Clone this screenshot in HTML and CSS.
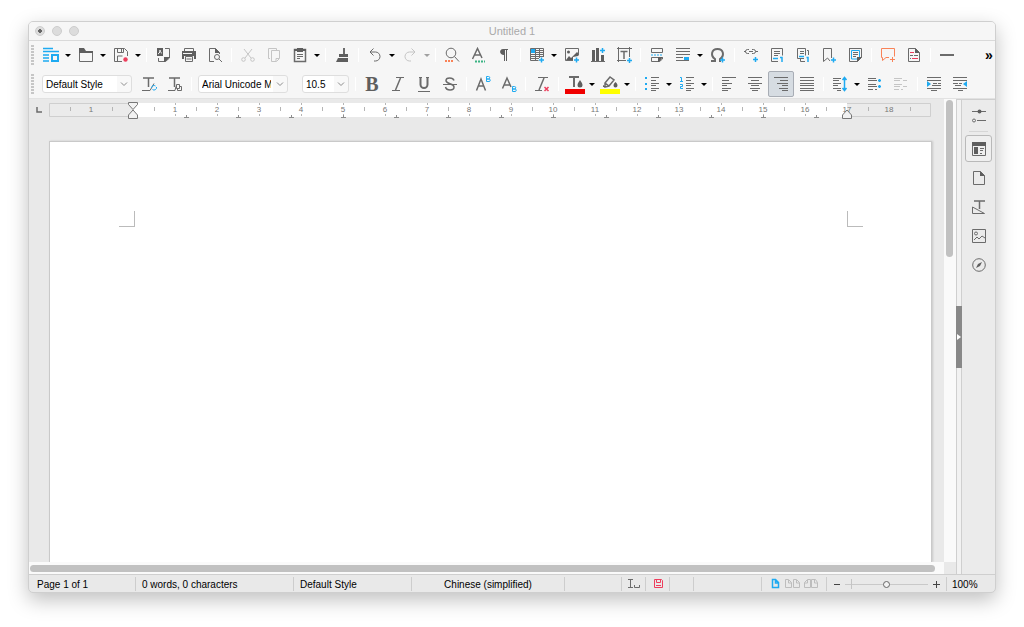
FILE: index.html
```html
<!DOCTYPE html>
<html lang="en">
<head>
    <meta charset="UTF-8">
    <meta name="viewport" content="width=device-width, initial-scale=1.0">
    <title>Untitled 1</title>
    <link rel="stylesheet" href="styles.css">
</head>
<body>

    <div class="window">
        <header class="titlebar">
            <div class="lights">
                <button class="light edited" aria-label="Close"></button>
                <button class="light" aria-label="Minimize"></button>
                <button class="light" aria-label="Zoom"></button>
            </div>
            <h1>Untitled 1</h1>
        </header>

        <div class="toolbars">
            <!-- Standard toolbar -->
            <div class="toolbar">
                <span class="grip"></span>
                <button class="btn" aria-label="New"><svg viewBox="0 0 16 16"><path class="blue mid" d="M0 1.500h10M0 4.500h16M0 8h6M0 11h6M0 14h6"/><path class="blue thick" d="M9 8h6v6H9z"/></svg></button>
                <button class="arrow" aria-label="New menu"></button>
                <button class="btn" aria-label="Open"><svg viewBox="0 0 16 16"><path d="M1.500 2.500v12h13v-10h-8l-1-2z"/><path class="fill" d="M1 1h5l2 3h7v2H1z"/></svg></button>
                <button class="arrow" aria-label="Open menu"></button>
                <button class="btn" aria-label="Save"><svg viewBox="0 0 16 16"><path d="M9 14.500H1.500v-13h10l3 3V9M4.500 1.500v4h6v-4M4.500 14v-5h5M8.500 2v3"/><circle class="redfill" cx="12.500" cy="12.500" r="2.200"/></svg></button>
                <button class="arrow" aria-label="Save menu"></button>
                <span class="sep"></span>
                <button class="btn" aria-label="Export as PDF"><svg viewBox="0 0 16 16"><path class="fill" d="M2 1h6v8H2z"/><path class="white" d="M3 7c2-1 2-3 2-4 0 2 1 3 2 3"/><path d="M10 1.500h4.500V11l-4 3.500h-7V11"/><path class="fill" d="M9 10h6l-5 5H9z"/></svg></button>
                <button class="btn" aria-label="Print"><svg viewBox="0 0 16 16"><path d="M3.500 4V1.500h9V4"/><path class="fill" d="M1 4h14v8h-2V9H3v3H1z"/><path d="M4.500 9.500h7v5h-7zM5.500 12h5"/><path class="white" d="M2 6.500h9"/></svg></button>
                <button class="btn" aria-label="Print Preview"><svg viewBox="0 0 16 16"><path d="M7 14.500H2.500v-13h6l4 4V7"/><path class="fill" d="M8 1l5 5H8z"/><circle cx="10" cy="10" r="2.500"/><path d="M12 12l3 3"/></svg></button>
                <span class="sep"></span>
                <button class="btn" aria-label="Cut" disabled><svg viewBox="0 0 16 16"><path d="M4 2l7 9M12 2l-7 9"/><circle cx="3.500" cy="12.500" r="1.800"/><circle cx="12.500" cy="12.500" r="1.800"/></svg></button>
                <button class="btn" aria-label="Copy" disabled><svg viewBox="0 0 16 16"><path d="M4 11.500H2.500v-10h8V3M5.500 3.500h8v8l-3 3h-5zM13 11.500h-3V14"/></svg></button>
                <button class="btn" aria-label="Paste"><svg viewBox="0 0 16 16"><path class="mid" d="M2.500 2.500h11v12h-11z"/><path class="fill" d="M5 1h6v4H5zM2 2h12v2H2z"/><path d="M5 7.500h6M5 9.500h6M5 11.500h3"/></svg></button>
                <button class="arrow" aria-label="Paste menu"></button>
                <span class="sep"></span>
                <button class="btn" aria-label="Clone Formatting"><svg viewBox="0 0 16 16"><path class="thick" d="M10 1v6"/><path class="fill" d="M5 7h9v3H5zM4 11h10v4H2z"/></svg></button>
                <span class="sep"></span>
                <button class="btn" aria-label="Undo"><svg viewBox="0 0 16 16"><path d="M6.500 1.500L3 5l3.500 3.500M3 5h5.500a4.500 4.500 0 0 1 0 9H7"/></svg></button>
                <button class="arrow" aria-label="Undo menu"></button>
                <button class="btn" aria-label="Redo" disabled><svg viewBox="0 0 16 16"><path d="M9.500 1.500L13 5 9.500 8.500M13 5H7.500a4.500 4.500 0 0 0 0 9H9"/></svg></button>
                <button class="arrow" aria-label="Redo menu" disabled></button>
                <span class="sep"></span>
                <button class="btn" aria-label="Find and Replace"><svg viewBox="0 0 16 16"><circle cx="7" cy="6" r="4.800"/><path d="M10.500 9.500l4.500 5"/><path class="orange dots" d="M1 14h9"/></svg></button>
                <button class="btn" aria-label="Spelling"><svg viewBox="0 0 16 16"><path class="mid" d="M2.500 12L7.500 1.500 12 11M4 8h7"/><path class="green dots" d="M5 14.500h10"/></svg></button>
                <button class="btn" aria-label="Formatting Marks"><svg viewBox="0 0 16 16"><path class="fill" d="M7 2h5v1h-1v11h-1V3H9v11H8V8C3 8 3 2 7 2z"/></svg></button>
                <span class="sep"></span>
                <button class="btn" aria-label="Insert Table"><svg viewBox="0 0 16 16"><path d="M1.500 1.500h13v8M1.500 1.500v12h8M1 5.500h14M1 9.500h14M6.500 1v13M10.500 1v10M1 11.500h9M1 7.500h14M1 3.500h14"/><path class="bluefill" d="M2 2h4v4H2z"/><path class="blue mid" d="M10 13h5M12.500 10.500v5"/></svg></button>
                <button class="arrow" aria-label="Table menu"></button>
                <button class="btn" aria-label="Insert Image"><svg viewBox="0 0 16 16"><path d="M9 13.500H1.500v-12h13v7"/><circle class="fill" cx="4.500" cy="5" r="1.500"/><path class="fill" d="M2 13l3-4 2 2 6-6 1 1v3l-5 1v3z"/><path class="blue mid" d="M10 13h5M12.500 10.500v5"/></svg></button>
                <button class="btn" aria-label="Insert Chart"><svg viewBox="0 0 16 16"><path d="M1 14.500h14"/><path class="fill" d="M2 3h3v11H2zM6 1h3v13H6zM11 8h3v6h-3z"/><path class="blue mid" d="M10 3.500h5M12.500 1v5"/></svg></button>
                <button class="btn" aria-label="Insert Text Box"><svg viewBox="0 0 16 16"><path d="M2.500 0v15M13.500 0v10M1 1.500h15M1 13.500h9"/><path class="mid" d="M4.500 4.500h7M8 4v8"/><path class="blue mid" d="M11 13.500h5M13.500 11v5"/></svg></button>
                <span class="sep"></span>
                <button class="btn" aria-label="Page Break"><svg viewBox="0 0 16 16"><path d="M2.500 1.500h11v4h-11zM2.500 14v-3.500h11V12l-3 2.500h-8z"/><path class="fill" d="M9 10h5l-4 5H9z"/><path class="blue" stroke-dasharray="2 1" d="M2 8h12"/></svg></button>
                <button class="btn" aria-label="Insert Field"><svg viewBox="0 0 16 16"><path d="M1 1.500h14M1 4.500h14M1 7.500h14M1 10.500h7M1 13.500h13"/><path class="bluefill" d="M9 10h5v3H9z"/></svg></button>
                <button class="arrow" aria-label="Field menu"></button>
                <button class="btn" aria-label="Special Character"><svg viewBox="0 0 16 16"><path class="thick" d="M1 14h4v-2C.500 9 1 2 7.500 2s7 7 2.500 10v2h1"/><path class="blue mid" d="M10 13h5M12.500 10.500v5"/></svg></button>
                <span class="sep"></span>
                <button class="btn" aria-label="Hyperlink"><svg viewBox="0 0 16 16"><path d="M1 4.500h2M6 2.500H4.500a2 2 0 0 0 0 4H6M6 4.500h4M9 2.500h1.500a2 2 0 0 1 0 4H9M12.500 4.500H15"/><path class="blue mid" d="M10 12.500h5M12.500 10v5"/></svg></button>
                <button class="btn" aria-label="Footnote"><svg viewBox="0 0 16 16"><path d="M9 14.500H2.500v-13h11v7M5 4.500h6M5 6.500h6M5 8.500h4"/><path class="blue mid" d="M4 11.500h5M11 10.500h2v4.500"/></svg></button>
                <button class="btn" aria-label="Endnote"><svg viewBox="0 0 16 16"><path d="M9 11.500H2.500v-10h8v7M5 4.500h4M5 6.500h4M12 3.500h1.500V8M5.500 12v2.500H10"/><path class="blue mid" d="M4 9.500h5M11.500 10.500h1.500V15"/></svg></button>
                <button class="btn" aria-label="Bookmark"><svg viewBox="0 0 16 16"><path d="M9 14l-2.500-3-4 3.500v-13h8V11"/><path class="blue mid" d="M10 13h5M12.500 10.500v5"/></svg></button>
                <button class="btn" aria-label="Cross-reference"><svg viewBox="0 0 16 16"><path d="M2 1.500h12.500v9l-4 4h-8v-13"/><path class="blue" d="M4.500 3.500h8v7l-2 1.500h-6z"/><path d="M6 5.500h5M6 7.500h5M6 9.500h3"/><path class="fill" d="M10 10h5l-5 5z"/></svg></button>
                <span class="sep"></span>
                <button class="btn" aria-label="Comment"><svg viewBox="0 0 16 16"><path class="orange" d="M9 10.500H6l-3.500 3v-3h-1v-9h13v8M10 12.500h5M12.500 10v5"/></svg></button>
                <button class="btn" aria-label="Track Changes"><svg viewBox="0 0 16 16"><path d="M2.500 1.500h7l4 4v9h-11z"/><path class="fill" d="M9 1l5 5H9z"/><path class="red" d="M4 5.500h4M6 11.500h6"/><path d="M4 8.500h3M8 8.500h4M4 11.500h1"/></svg></button>
                <span class="sep"></span>
                <button class="btn" aria-label="Insert Line"><svg viewBox="0 0 16 16"><path class="thick" d="M1 8h14"/></svg></button>
                <button class="more" aria-label="More controls">»</button>
            </div>

            <!-- Formatting toolbar -->
            <div class="toolbar format">
                <span class="grip"></span>
                <select class="combo" aria-label="Paragraph style"><option>Default Style</option></select>
                <button class="btn" aria-label="Update Style"><svg viewBox="0 0 16 16"><path class="mid" d="M2 2h11M7.500 2v9"/><path d="M1 14.500h8l4-7"/><path class="blue" d="M10.500 12a2.500 2.500 0 0 1 4-2M15.500 11a2.500 2.500 0 0 1-4 2.500"/></svg></button>
                <button class="btn" aria-label="New Style"><svg viewBox="0 0 16 16"><path class="mid" d="M2 2h11M7.500 2v9"/><path d="M1 14.500h7l1-4M9.500 8.500h3v4h-3zM12.500 10.500h2v4h-4v-2"/></svg></button>
                <span class="sep"></span>
                <select class="combo font" aria-label="Font name"><option>Arial Unicode MS</option></select>
                <select class="combo size" aria-label="Font size"><option>10.5</option></select>
                <span class="sep"></span>
                <button class="btn letter bold" aria-label="Bold">B</button>
                <button class="btn" aria-label="Italic"><svg viewBox="0 0 16 16"><path d="M6 1.500h8M2 14.500h8"/><path class="mid" d="M10.500 2l-5 12"/></svg></button>
                <button class="btn" aria-label="Underline"><svg viewBox="0 0 16 16"><path class="thick" d="M4.500 1v7.500a3.500 3.500 0 0 0 7 0V1"/><path d="M3 1.500h3M10 1.500h3M2 15.500h12"/></svg></button>
                <button class="btn" aria-label="Strikethrough"><svg viewBox="0 0 16 16"><path class="mid" d="M12 4.500C11 1 4 1 4 4.500c0 4 8 2.500 8 6.500 0 4-7.500 4-8.500 0"/><path d="M1 8.500h14"/></svg></button>
                <span class="sep"></span>
                <button class="btn" aria-label="Superscript"><svg viewBox="0 0 16 16"><path class="mid" d="M1.500 14.500L6 3l4.500 11.500M3 10h6"/><path class="blue" d="M11.500.500h2a1 1 0 0 1 0 2.500h-2zM11.500 3h2.500a1 1 0 0 1 0 2.500h-2.500z"/></svg></button>
                <button class="btn" aria-label="Subscript"><svg viewBox="0 0 16 16"><path class="mid" d="M1.500 12.500L6 2l4 9M3 9h6"/><path class="blue" d="M11.500 10.500h2a1 1 0 0 1 0 2.500h-2zM11.500 13h2.500a1 1 0 0 1 0 2.500h-2.500z"/></svg></button>
                <span class="sep"></span>
                <button class="btn" aria-label="Clear Formatting"><svg viewBox="0 0 16 16"><path d="M4 1.500h10M1 14.500h7"/><path class="mid" d="M10 2L5 14"/><path class="red mid" d="M10.500 11l4 4M14.500 11l-4 4"/></svg></button>
                <span class="sep"></span>
                <button class="btn" aria-label="Font Color"><svg class="wide" viewBox="0 0 20 20"><path class="thick" d="M4 3h10M9 3v10"/><path class="fill" d="M15 6c1 2 2.500 3 2.500 5a2.300 2.300 0 0 1-5 0c0-2 1.500-3 2.500-5z"/><path class="swatch-red" d="M0 15h20v5H0z"/></svg></button>
                <button class="arrow" aria-label="Font color menu"></button>
                <button class="btn" aria-label="Highlighting"><svg class="wide" viewBox="0 0 20 20"><path class="mid" d="M5 9l5-6 4 3-5 6-4 1zM5 9l4 3"/><path class="fill" d="M15.500 8c1 1 2 2 2 3.500a2 2 0 0 1-4 0c0-1.500 1-2.500 2-3.500zM3 11l3 2H3z"/><path class="swatch-yellow" d="M0 15h20v5H0z"/></svg></button>
                <button class="arrow" aria-label="Highlighting menu"></button>
                <span class="sep"></span>
                <button class="btn" aria-label="Bullets"><svg viewBox="0 0 16 16"><path class="bluefill" d="M1 1h2v2H1zM1 7h2v2H1zM1 12h2v2H1z"/><path d="M7 1.500h8M7 4.500h5M7 7.500h8M7 9.500h5M7 12.500h8M7 14.500h5"/></svg></button>
                <button class="arrow" aria-label="Bullets menu"></button>
                <button class="btn" aria-label="Numbering"><svg viewBox="0 0 16 16"><path class="blue" d="M1 1.500h1.500v4M1 5.500h3M1 8.500h2.500v2H1.500v2H4"/><path d="M7 1.500h8M7 4.500h5M7 7.500h8M7 9.500h5M7 12.500h8M7 14.500h5"/></svg></button>
                <button class="arrow" aria-label="Numbering menu"></button>
                <span class="sep"></span>
                <button class="btn" aria-label="Align Left"><svg viewBox="0 0 16 16"><path d="M1 1.500h14M1 4.500h7M1 7.500h10M1 9.500h5M1 12.500h9M1 14.500h6"/></svg></button>
                <button class="btn" aria-label="Center"><svg viewBox="0 0 16 16"><path d="M1 1.500h14M4 4.500h8M1 7.500h14M4 9.500h8M3 12.500h10M5 14.500h6"/></svg></button>
                <button class="btn active" aria-label="Align Right"><svg viewBox="0 0 16 16"><path d="M1 1.500h14M7 4.500h8M4 7.500h11M9 9.500h6M6 12.500h9M9 14.500h6"/></svg></button>
                <button class="btn" aria-label="Justified"><svg viewBox="0 0 16 16"><path d="M1 1.500h14M1 4.500h14M1 7.500h14M1 9.500h14M1 12.500h14M1 14.500h14"/></svg></button>
                <span class="sep"></span>
                <button class="btn" aria-label="Line Spacing"><svg viewBox="0 0 16 16"><path d="M1 2.500h8M1 4.500h6M1 7.500h8M1 9.500h5M1 12.500h8M5 14.500h4"/><path class="blue mid" d="M12.500 2v12M10.500 4l2-2.500 2 2.500M10.500 12l2 2.500 2-2.500"/></svg></button>
                <button class="arrow" aria-label="Line spacing menu"></button>
                <button class="btn" aria-label="Increase Paragraph Spacing"><svg viewBox="0 0 16 16"><path d="M1 2.500h8M1 4.500h9M1 8.500h8M1 10.500h9M1 13.500h5M8 13.500h2"/><path class="blue mid" d="M11 4.500h3M12.500 3v3M11 10.500h3M12.500 9v3"/></svg></button>
                <button class="btn" aria-label="Decrease Paragraph Spacing" disabled><svg viewBox="0 0 16 16"><path d="M1 2.500h8M1 4.500h6M1 8.500h8M1 10.500h6M1 13.500h5M8 13.500h2M10 4.500h4M10 10.500h4"/></svg></button>
                <span class="sep"></span>
                <button class="btn" aria-label="Increase Indent"><svg viewBox="0 0 16 16"><path d="M1 1.500h14M1 4.500h14M7 7.500h4M12 7.500h3M6 9.500h9M1 12.500h14M5 14.500h6"/><path class="bluefill" d="M1 5l4 3-4 3z"/></svg></button>
                <button class="btn" aria-label="Decrease Indent"><svg viewBox="0 0 16 16"><path d="M1 1.500h14M1 4.500h14M1 7.500h5M7 7.500h3M3 9.500h6M1 12.500h14M6 14.500h5"/><path class="bluefill" d="M15 5l-4 3 4 3z"/></svg></button>
            </div>
        </div>

        <div class="workspace">
            <div class="editor">
                <div class="view">
                    <main class="canvas">
                        <div class="ruler-row">
                            <button class="tab-type" aria-label="Tab type"><svg viewBox="0 0 8 8"><path class="mid" d="M2 1v5h5"/></svg></button>
                            <svg class="ruler" viewBox="0 0 882 18" aria-hidden="true">
                                <defs>
                                    <pattern id="half" x="63" width="42" height="18" patternUnits="userSpaceOnUse"><path class="tick" d="M.500 6v4"/></pattern>
                                    <pattern id="unit" x="84" width="42" height="18" patternUnits="userSpaceOnUse"><path class="tick" d="M.500 2v2M.500 13v2"/></pattern>
                                </defs>
                                <path class="outer" d="M.500 2.500h881v13H.500z"/>
                                <path class="inner" d="M85 2h713v14H85z"/>
                                <path class="ticks" fill="url(#half)" d="M10 2h862v14H10z"/>
                                <path class="ticks" fill="url(#unit)" d="M88 2h708v14H88z"/>
                                <path class="tabs" d="M135 16.500h5M187 16.500h5M240 16.500h5M292 16.500h5M345 16.500h5M397 16.500h5M450 16.500h5M502 16.500h5M555 16.500h5M607 16.500h5M660 16.500h5M712 16.500h5M765 16.500h5M137.500 14v3M189.500 14v3M242.500 14v3M294.500 14v3M347.500 14v3M399.500 14v3M452.500 14v3M504.500 14v3M557.500 14v3M609.500 14v3M662.500 14v3M714.500 14v3M767.500 14v3"/>
                                <g class="numbers">
                                    <text x="42" y="11">1</text><text x="126" y="11">1</text><text x="168" y="11">2</text><text x="210" y="11">3</text><text x="252" y="11">4</text><text x="294" y="11">5</text><text x="336" y="11">6</text><text x="378" y="11">7</text><text x="420" y="11">8</text><text x="462" y="11">9</text><text x="504" y="11">10</text><text x="546" y="11">11</text><text x="588" y="11">12</text><text x="630" y="11">13</text><text x="672" y="11">14</text><text x="714" y="11">15</text><text x="756" y="11">16</text><text x="798" y="11">17</text><text x="840" y="11">18</text>
                                </g>
                                <path class="marker" d="M79.500 1.500h9v2l-4.500 5-4.500-5zM79.500 17.500h9v-3.500l-4.500-5-4.500 5z"/>
                                <path class="marker" d="M793.500 17.500h9v-3.500l-4.500-5-4.500 5z"/>
                            </svg>
                        </div>
                        <div class="page" contenteditable="true" aria-label="Document">
                            <div class="crops"><i class="crop left"></i><i class="crop right"></i></div>
                        </div>
                    </main>
                    <div class="vscroll"><span class="thumb"></span></div>
                </div>
                <div class="hscroll"><span class="thumb"></span></div>
            </div>
            <div class="splitter"><button class="hide" aria-label="Hide sidebar"></button></div>
            <nav class="sidebar">
                <button class="side" aria-label="Sidebar Settings"><svg viewBox="0 0 16 16"><path d="M1 3.500h14M6 12.500h9"/><circle class="fill" cx="8.500" cy="3.500" r="2"/><circle cx="3" cy="12.500" r="1.500"/></svg></button>
                <hr>
                <button class="side current" aria-label="Properties"><svg viewBox="0 0 16 16"><path d="M1.500 1.500h13v13h-13zM9 7.500h4M9 9.500h3M9 12.500h2"/><path class="fill" d="M1 1h14v4H1zM3 6h4v7H3z"/></svg></button>
                <button class="side" aria-label="Page"><svg viewBox="0 0 16 16"><path d="M2.500 1.500h7l4 4v9h-11z"/><path class="fill" d="M9 1l5 5H9z"/></svg></button>
                <button class="side" aria-label="Styles"><svg viewBox="0 0 16 16"><path class="mid" d="M3 2h11M8.500 2v8"/><path d="M1.500 8v6.500h12z"/></svg></button>
                <button class="side" aria-label="Gallery"><svg viewBox="0 0 16 16"><path d="M1.500 1.500h13v13h-13zM3 12l3-3 2 2 3-3 3 2"/><circle cx="5" cy="5.500" r="1.500"/></svg></button>
                <button class="side" aria-label="Navigator"><svg viewBox="0 0 16 16"><circle cx="8" cy="8" r="6.300"/><path class="fill" d="M11 5l-2 4-4 2 2-4z"/></svg></button>
            </nav>
        </div>

        <footer class="statusbar">
            <span class="cell pages">Page 1 of 1</span>
            <span class="cell words">0 words, 0 characters</span>
            <span class="cell style">Default Style</span>
            <span class="cell language">Chinese (simplified)</span>
            <span class="cell insert"></span>
            <span class="cell small"><svg class="mini" viewBox="0 0 14 12"><path d="M1 1.500h5M3.500 1.500v8M1 9.500h5M7.500 7v2.500h5V7"/></svg></span>
            <span class="cell small"><svg class="mini" viewBox="0 0 14 12"><path class="red" d="M3.500 1.500h7l1 1v7h-8zM5.500 1.500v3h4v-3M5 7.500h5"/></svg></span>
            <span class="cell small"></span>
            <span class="cell blank"></span>
            <span class="cell views">
                <button class="viewbtn" aria-label="Single page"><svg class="mini" viewBox="0 0 14 12"><path class="blue mid" d="M4.500 1.500h3l3 3v5h-6zM7.500 2v3h3"/></svg></button>
                <button class="viewbtn" aria-label="Multiple pages"><svg class="pair" viewBox="0 0 18 12"><path class="pale" d="M2.500 1.500h3l3 3v5h-6zM5.500 2v3h3M10.500 1.500h3l3 3v5h-6zM13.500 2v3h3"/></svg></button>
                <button class="viewbtn" aria-label="Book view"><svg class="pair" viewBox="0 0 18 12"><path class="pale" d="M8.500 9.500h-6v-5l3-3h3zM5.500 2v3h-3M9.500 1.500h4l2 3v5h-6zM12.500 2v3h3"/></svg></button>
            </span>
            <span class="cell zoom">
                <button class="step" aria-label="Zoom out"><svg viewBox="0 0 8 8"><path d="M1 4.500h6"/></svg></button>
                <input type="range" min="0" max="100" value="50" aria-label="Zoom">
                <button class="step" aria-label="Zoom in"><svg viewBox="0 0 8 8"><path d="M1 4.500h7M4.500 1v7"/></svg></button>
            </span>
            <span class="cell percent">100%</span>
        </footer>
    </div>

</body>
</html>
```
FILE: styles.css
```css
* {
    margin: 0;
    padding: 0;
    box-sizing: border-box;
}

body {
    font-family: "Liberation Sans", Arial, sans-serif;
    font-size: 10px;
    color: #000;
    background: #fff;
    height: 100vh;
    padding: 21px 28px 34px;
    overflow: hidden;
}

button {
    background: none;
    border: none;
    font-family: inherit;
    color: inherit;
}

.window {
    height: 100%;
    display: flex;
    flex-direction: column;
    background: #e9e9e9;
    border: 1px solid #cfcfcf;
    border-radius: 5px;
    box-shadow: 0 7px 20px rgba(0, 0, 0, 0.25);
    overflow: hidden;
}

/* Title bar */
.titlebar {
    display: grid;
    grid-template-columns: 1fr auto 1fr;
    align-items: center;
    height: 19px;
    padding: 0 6px;
    background: #f6f6f6;
    border-bottom: 1px solid #d9d9d9;
}

.titlebar h1 {
    font-size: 11px;
    font-weight: normal;
    color: #aaa;
}

.lights {
    display: flex;
    gap: 7px;
}

.light {
    width: 10px;
    height: 10px;
    border: 1px solid #cdcdcd;
    border-radius: 50%;
    background: #dcdcdc;
}

.light.edited {
    background: radial-gradient(circle, #666 0 2px, #dcdcdc 2px);
}

/* Icons */
svg {
    display: block;
    width: 16px;
    height: 16px;
    fill: none;
    stroke: #6b6b6b;
    stroke-width: 1;
}

svg.wide {
    width: 20px;
    height: 20px;
}

.mid { stroke-width: 1.5; }
.thick { stroke-width: 2; }
.fill { fill: #5e5e5e; stroke: none; }
.blue { stroke: #1eaaf1; }
.bluefill { fill: #1eaaf1; stroke: none; }
.red { stroke: #ed3d5c; }
.redfill { fill: #ed3d5c; stroke: none; }
.orange { stroke: #f98358; }
.green { stroke: #3bb383; }
.white { stroke: #f6f6f6; }
.pale { stroke: #bdbdbd; }
.dots { stroke-width: 2; stroke-dasharray: 2 1; }
.swatch-red { fill: #f00000; stroke: none; }
.swatch-yellow { fill: #ff0; stroke: none; }

/* Toolbars */
.toolbars {
    display: flex;
    flex-direction: column;
    gap: 3px;
    padding: 1px 0;
    background: #f6f6f6;
    border-bottom: 1px solid #e2e2e2;
}

.toolbar {
    display: flex;
    align-items: center;
    height: 26px;
    padding-left: 2px;
}

.grip {
    width: 3px;
    height: 20px;
    margin-right: 4px;
    background: repeating-linear-gradient(#c6c6c6 0 2px, #f6f6f6 2px 3px);
}

.format .grip {
    margin-right: 8px;
}

.btn {
    flex: none;
    display: flex;
    align-items: center;
    justify-content: center;
    width: 26px;
    height: 26px;
}

.btn:disabled,
.arrow:disabled {
    opacity: 0.35;
}

.btn.active {
    background: #d6dce2;
    border: 1px solid #a8adb5;
    border-radius: 2px;
}

.btn.bold {
    font: bold 20px "Liberation Serif", serif;
    color: #5e5e5e;
}

.arrow {
    flex: none;
    width: 9px;
    height: 26px;
}

.arrow::before {
    content: "";
    display: block;
    width: 0;
    margin-left: 1px;
    border: solid transparent;
    border-width: 3px 3px 0;
    border-top-color: #000;
}

.sep {
    flex: none;
    width: 1px;
    height: 14px;
    margin: 0 3px;
    background: #fff;
}

.more {
    margin-left: auto;
    width: 12px;
    font-size: 14px;
    font-weight: bold;
    line-height: 26px;
}

.combo {
    appearance: none;
    flex: none;
    width: 90px;
    height: 18px;
    margin-right: 4px;
    padding: 0 16px 0 3px;
    border: 1px solid #dedede;
    border-radius: 3px;
    font-family: inherit;
    font-size: 10px;
    color: #000;
    background: #fff url("data:image/svg+xml,%3Csvg xmlns='http://www.w3.org/2000/svg' width='14' height='16'%3E%3Cpath fill='%23f8f8f8' d='M0 0h14v16H0z'/%3E%3Cpath fill='none' stroke='%238c8c8c' d='M4 6.500l3 3 3-3'/%3E%3C/svg%3E") no-repeat right center;
}

.combo.font {
    margin: 0 14px 0 3px;
}

.combo.size {
    width: 47px;
    margin-right: 3px;
}

/* Workspace */
.workspace {
    flex: 1;
    display: flex;
    min-height: 0;
}

.editor {
    flex: 1;
    display: flex;
    flex-direction: column;
    min-width: 0;
}

.view {
    flex: 1;
    display: flex;
    min-height: 0;
}

.canvas {
    flex: 1;
    display: flex;
    flex-direction: column;
    min-width: 0;
    padding: 2px 12px 0 6px;
}

.ruler-row {
    display: flex;
    align-items: center;
    gap: 6px;
    margin: 0 1px 22px 0;
}

.tab-type svg {
    width: 8px;
    height: 8px;
}

.ruler {
    flex: 1;
    width: auto;
    height: 18px;
    min-width: 0;
}

.outer {
    fill: #ebebeb;
    stroke: #cfcfcf;
}

.inner {
    fill: #fff;
    stroke: none;
}

.ticks {
    stroke: none;
}

.tick {
    stroke: #b5b5b5;
}

.tabs {
    stroke: #8c8c8c;
}

.numbers {
    font-size: 8px;
    text-anchor: middle;
    fill: #777;
    stroke: none;
}

.marker {
    fill: #f2f2f2;
    stroke: #777;
}

.page {
    flex: 1;
    margin-left: 14px;
    padding: 69px 68px 0 69px;
    background: #fff;
    border: 1px solid #c9c9c9;
    border-bottom: none;
    box-shadow: 1px 0 2px rgba(0, 0, 0, 0.15);
    outline: none;
}

.crops {
    display: flex;
    justify-content: space-between;
}

.crop {
    width: 16px;
    height: 16px;
    border-bottom: 1px solid #bbb;
}

.crop.left {
    border-right: 1px solid #bbb;
}

.crop.right {
    border-left: 1px solid #bbb;
}

.vscroll {
    width: 12px;
    padding: 1px 2px 0;
    background: #fafafa;
}

.vscroll .thumb {
    display: block;
    width: 7px;
    height: 34%;
    border-radius: 4px;
    background: #c1c1c1;
}

.hscroll {
    height: 12px;
    margin-right: 12px;
    padding: 3px 9px 2px 1px;
    background: #fafafa;
}

.hscroll .thumb {
    display: block;
    height: 7px;
    border-radius: 4px;
    background: #c1c1c1;
}

.splitter {
    width: 6px;
    display: flex;
    align-items: center;
    background: #f2f2f2;
    border: 1px solid #cfcfcf;
    border-width: 1px 1px 0;
}

.hide {
    flex: none;
    width: 6px;
    height: 62px;
    margin-left: -1px;
    background: #888;
}

.hide::before {
    content: "";
    display: block;
    width: 0;
    margin-left: 1px;
    border: solid transparent;
    border-width: 3px 0 3px 4px;
    border-left-color: #fff;
}

/* Sidebar */
.sidebar {
    display: flex;
    flex-direction: column;
    align-items: center;
    gap: 2px;
    width: 33px;
    padding-top: 2px;
    background: #ebebeb;
    border-top: 1px solid #cfcfcf;
}

.side {
    display: flex;
    align-items: center;
    justify-content: center;
    width: 27px;
    height: 27px;
    border: 1px solid transparent;
    border-radius: 3px;
}

.side.current {
    border-color: #b9b9b9;
    background: #efefef;
}

.sidebar hr {
    width: 19px;
    margin-bottom: 1px;
    border: none;
    border-top: 1px solid #d6d6d6;
}

/* Status bar */
.statusbar {
    display: flex;
    align-items: center;
    height: 18px;
    border-top: 1px solid #cfcfcf;
    white-space: nowrap;
}

.cell {
    flex: none;
    display: flex;
    align-items: center;
    height: 14px;
    padding: 1px 0 0 6px;
    border-right: 1px solid #cdcdcd;
}

.pages { width: 107px; padding-left: 8px; }
.words { width: 158px; }
.style { width: 118px; }
.language { flex: 1; justify-content: center; padding-left: 0; }
.insert { width: 57px; }
.small { width: 24px; padding-left: 0; justify-content: center; }
.blank { width: 68px; }
.views { width: 65px; gap: 1px; }
.zoom { width: 120px; padding: 1px 6px 0; gap: 4px; }
.percent { width: 48px; padding-left: 5px; border: none; }

.mini {
    width: 14px;
    height: 12px;
}

.pair {
    width: 18px;
    height: 12px;
}

.step svg {
    width: 8px;
    height: 8px;
    stroke: #444;
}

.zoom input {
    appearance: none;
    flex: 1;
    min-width: 0;
    height: 10px;
    background:
        linear-gradient(#c4c4c4, #c4c4c4) 6px 0 / 1px 10px no-repeat,
        linear-gradient(#c9c9c9, #c9c9c9) 0 5px / 100% 1px no-repeat;
}

.zoom input::-webkit-slider-thumb {
    appearance: none;
    width: 7px;
    height: 7px;
    border: 1px solid #666;
    border-radius: 50%;
    background: #f2f2f2;
}
```
